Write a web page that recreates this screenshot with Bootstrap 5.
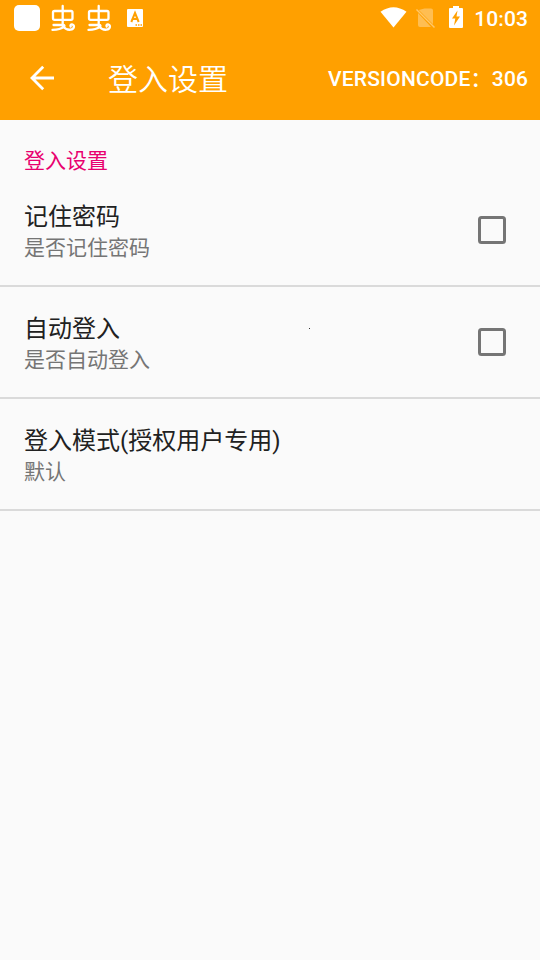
<!DOCTYPE html>
<html lang="zh-CN">
<head>
<meta charset="utf-8">
<meta name="viewport" content="width=device-width, initial-scale=1">
<title>登入设置</title>
<link href="https://cdn.jsdelivr.net/npm/bootstrap@5.3.0/dist/css/bootstrap.min.css" rel="stylesheet">
<style>
body { font-family: Roboto, "Noto Sans CJK SC", sans-serif; background: #fafafa; min-height: 960px; overflow: hidden; }
svg { display: block; flex: none; }
.app-head { background: #ffa000; height: 120px; }
.status-bar { height: 36px; padding: 0 12px 0 14px; }
.clock { font-size: 21px; line-height: 34px; padding-top: 2px; font-weight: 500; margin-left: 10px; letter-spacing: .1px; }
.toolbar { height: 84px; padding: 0 12px 0 24px; }
.page-title { font-size: 30px; line-height: 40px; padding-top: 3px; margin-left: 48px; font-weight: 350; }
.version { font-size: 21px; line-height: 30px; padding-top: 2px; font-weight: 500; letter-spacing: .2px; margin-right: -.2px; }
.category { color: #e8006f; font-size: 21px; line-height: 30px; padding: 26px 24px 0; height: 55px; }
.list-group-flush > .list-group-item.pref { height: 112px; border-width: 0 0 2px; border-color: #dadada; padding: 26px 24px 0; background: transparent; }
.pref-name { color: #212121; font-size: 24px; line-height: 32px; }
.pref-note { color: #757575; font-size: 21px; line-height: 31px; }
.pref .form-check-input { width: 28px; height: 28px; border: 3px solid #757575; border-radius: 3.5px; margin: 15px 10px 0 0; background-color: transparent; }
.speck { position: absolute; left: 309px; top: 41px; width: 1px; height: 1px; background: #333; }
</style>
</head>
<body>
<header class="app-head text-white">
  <div class="status-bar d-flex align-items-center">
    <svg width="132" height="36" viewBox="14 0 132 36" fill="none">
      <rect x="14" y="5" width="26" height="26" rx="5" fill="#fff"/>
      <g id="bug" stroke="#fff" stroke-width="2.300" stroke-linecap="round" stroke-linejoin="round">
        <rect x="53" y="11" width="19.500" height="8.800" rx="1.500"/>
        <path d="M62.700 6v18.500M53.500 25h10c1.200 0 1.200 1 .5 1.700-2.500 2.200-5.500 3.200-11.500 3.200M62.500 26c2.500 3 5 4 8 3.700 4-.4 4.300-4.500 1.800-5.200-1.500-.3-2.300 1-1.600 2"/>
      </g>
      <use href="#bug" x="36"/>
      <rect x="127" y="9" width="16" height="18" rx="1" fill="#fff"/>
      <path d="M131.300 22l3.700-9 3.700 9M132.500 19h5" stroke="#ffa000" stroke-width="2"/>
      <path d="M135.500 25h6.500" stroke="#ffa000" stroke-width="1.300" stroke-dasharray="1.500 1"/>
    </svg>
    <svg class="ms-auto" width="84" height="36" viewBox="380 0 84 36" fill="none">
      <path d="M380.500 11.800Q393.500 2.500 406.500 11.800L393.500 27.500z" fill="#fff"/>
      <path d="M424.500 8.500H431q2 0 2 2V24.200L418.800 10zM418 13L431 27h-11q-2 0-2-2z" fill="#fff" fill-opacity=".32"/>
      <path d="M416.500 9.500L434.500 27.500" stroke="#fff" stroke-opacity=".42" stroke-width="1.500"/>
      <path d="M453 6h6v2h3q1 0 1 1v18q0 1-1 1h-12q-1 0-1-1V9q0-1 1-1h3z" fill="#fff"/>
      <path d="M457.500 10.500l-5.500 8h3.300l-1.300 7 6-9h-3.500z" fill="#ffa000"/>
    </svg>
    <span class="clock">10:03</span>
  </div>
  <div class="toolbar d-flex align-items-center">
    <svg width="36" height="36" viewBox="24 60 36 36" fill="none" stroke="#fff" stroke-width="2.800"><path d="M54 78H32M43.200 66.700L32 78l11.200 11.300"/></svg>
    <h1 class="page-title mb-0">登入设置</h1>
    <span class="version ms-auto text-nowrap">VERSIONCODE：306</span>
  </div>
</header>
<main>
  <div class="category">登入设置</div>
  <div class="list-group list-group-flush">
    <label class="list-group-item pref d-flex justify-content-between">
      <span><span class="pref-name d-block">记住密码</span><span class="pref-note d-block">是否记住密码</span></span>
      <input class="form-check-input" type="checkbox">
    </label>
    <label class="list-group-item pref d-flex justify-content-between">
      <span><span class="pref-name d-block">自动登入</span><span class="pref-note d-block">是否自动登入</span></span>
      <span class="speck"></span>
      <input class="form-check-input" type="checkbox">
    </label>
    <div class="list-group-item pref">
      <div class="pref-name">登入模式(授权用户专用)</div>
      <div class="pref-note">默认</div>
    </div>
  </div>
</main>
<script src="https://cdn.jsdelivr.net/npm/bootstrap@5.3.0/dist/js/bootstrap.bundle.min.js"></script>
</body>
</html>
